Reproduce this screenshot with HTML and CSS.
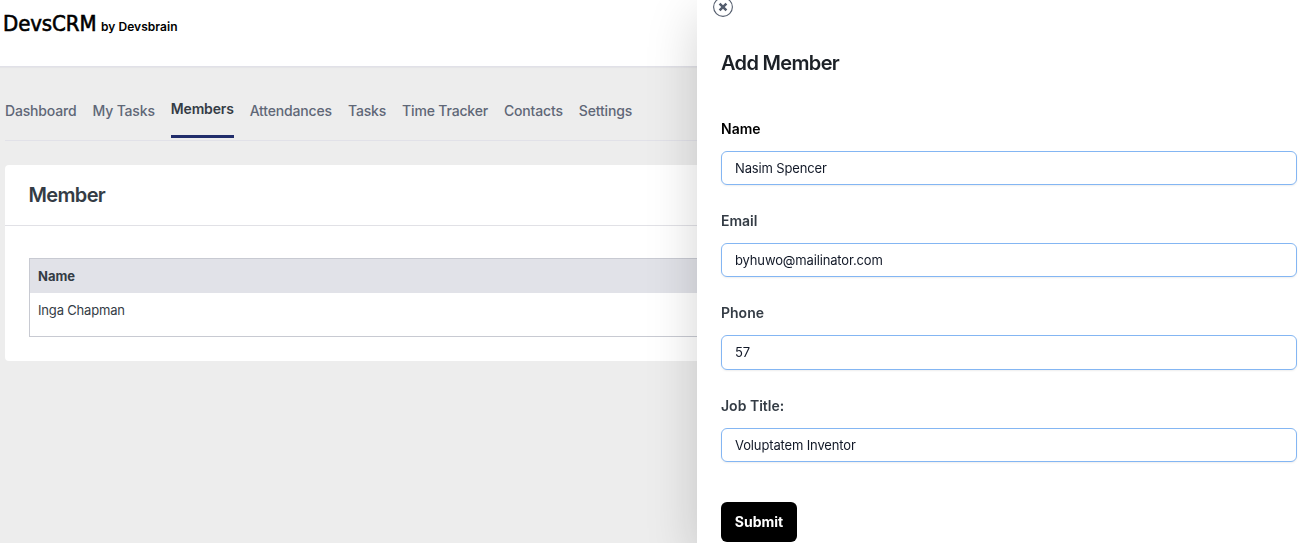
FILE: index.html
```html
<!DOCTYPE html>
<html lang="en">
<head>
    <meta charset="UTF-8">
    <meta name="viewport" content="width=device-width, initial-scale=1.0">
    <title>DevsCRM - Members</title>
    <link rel="stylesheet" href="styles.css">
</head>
<body>
    <header class="topbar">
        <span class="logo">DevsCRM</span>
        <span class="byline">by Devsbrain</span>
    </header>

    <main class="content">
        <nav class="tabs">
            <a class="tab">Dashboard</a>
            <a class="tab">My Tasks</a>
            <a class="tab active">Members</a>
            <a class="tab">Attendances</a>
            <a class="tab">Tasks</a>
            <a class="tab">Time Tracker</a>
            <a class="tab">Contacts</a>
            <a class="tab">Settings</a>
        </nav>

        <section class="card">
            <h2 class="card-title">Member</h2>
            <div class="card-body">
                <table class="members">
                    <thead>
                        <tr><th>Name</th></tr>
                    </thead>
                    <tbody>
                        <tr><td>Inga Chapman</td></tr>
                    </tbody>
                </table>
            </div>
        </section>
    </main>

    <aside class="drawer">
        <button class="close" type="button" aria-label="Close">
            <svg width="22" height="22" viewBox="0 0 22 22" fill="none">
                <circle cx="11" cy="11" r="9.4" stroke="#545d6d" stroke-width="1.1"/>
                <path d="M7.6 7.6l6.8 6.8M14.4 7.6l-6.8 6.8" stroke="#545d6d" stroke-width="2.5"/>
            </svg>
        </button>
        <h2 class="drawer-title">Add Member</h2>
        <form class="member-form">
            <div class="field">
                <label class="dark" for="name">Name</label>
                <input type="text" id="name" value="Nasim Spencer">
            </div>
            <div class="field">
                <label for="email">Email</label>
                <input type="text" id="email" value="byhuwo@mailinator.com">
            </div>
            <div class="field">
                <label for="phone">Phone</label>
                <input type="text" id="phone" value="57">
            </div>
            <div class="field">
                <label for="job">Job Title:</label>
                <input type="text" id="job" value="Voluptatem Inventor">
            </div>
            <button class="submit" type="submit">Submit</button>
        </form>
    </aside>
</body>
</html>
```

FILE: styles.css
```css
* {
    box-sizing: border-box;
}

body {
    margin: 0;
    height: 543px;
    overflow: hidden;
    font-family: Inter, "Liberation Sans", sans-serif;
    background-color: #ededed;
    color: #343c45;
}

.topbar {
    display: flex;
    align-items: baseline;
    height: 67px;
    padding: 10px 3px 0;
    background-color: #ffffff;
    border-bottom: 1px solid #e1e1e8;
    box-shadow: 0 1px 1px rgba(60, 60, 90, 0.04);
    color: #000000;
}

.logo {
    width: 98px;
    font-family: "DejaVu Sans Condensed", "DejaVu Sans", sans-serif;
    font-stretch: condensed;
    font-size: 22px;
    line-height: 27px;
    letter-spacing: -0.1px;
    -webkit-text-stroke: 0.6px #000000;
}

.byline {
    font-size: 12px;
    font-weight: 600;
    letter-spacing: 0.04px;
}

.content {
    padding: 24px 5px 0;
}

.tabs {
    display: flex;
    gap: 16px;
    height: 50px;
    border-bottom: 1px solid #e1e1e8;
}

.tab {
    height: 47px;
    padding-top: 10px;
    font-size: 14px;
    font-weight: 500;
    line-height: 20px;
    letter-spacing: -0.17px;
    color: #5f6777;
    white-space: nowrap;
}

.tab.active {
    padding-top: 8px;
    border-bottom: 3px solid #212d6b;
    font-weight: 600;
    color: #343c45;
}

.card {
    margin-top: 24px;
    height: 196px;
    background-color: #ffffff;
    border-radius: 4px;
}

.card-title {
    margin: 0;
    height: 61px;
    padding-left: 23.5px;
    border-bottom: 1px solid #e1e1e6;
    font-size: 20px;
    font-weight: 600;
    line-height: 60px;
    letter-spacing: -0.65px;
}

.card-body {
    padding: 32px 24px 24px;
}

.members {
    width: 100%;
    height: 79px;
    border: 1px solid #c8cad2;
    border-spacing: 0;
    font-size: 13px;
    text-align: left;
}

.members th {
    height: 34px;
    padding: 0 8px;
    background-color: #e1e2e8;
    font-weight: 700;
}

.members td {
    height: 43px;
    padding: 8px 8px 0;
    line-height: 18px;
    letter-spacing: -0.17px;
    vertical-align: top;
}

.drawer {
    position: fixed;
    top: 0;
    right: 0;
    width: 603px;
    height: 543px;
    padding: 0 3px 0 24px;
    background-color: #ffffff;
    box-shadow: 0 16px 48px rgba(0, 0, 0, 0.176);
}

.close {
    position: absolute;
    top: -4px;
    left: 15px;
    width: 22px;
    height: 22px;
    padding: 0;
    border: 0;
    background: none;
}

.close svg {
    display: block;
}

.drawer-title {
    margin: 0;
    padding-top: 48px;
    font-size: 20px;
    font-weight: 600;
    line-height: 30px;
    letter-spacing: -0.67px;
    color: #1c2127;
}

.member-form {
    padding-top: 41px;
}

.field {
    height: 92.22px;
}

.field label {
    display: block;
    margin-bottom: 12px;
    font-size: 14px;
    font-weight: 600;
    line-height: 20px;
}

.field label.dark {
    color: #000000;
}

.field input {
    display: block;
    width: 100%;
    height: 34.1px;
    padding: 0 13px;
    border: 1px solid #84b6f3;
    border-radius: 6px;
    box-shadow: 0 1px 2px rgba(0, 0, 0, 0.07);
    font-family: inherit;
    font-size: 13px;
    letter-spacing: -0.14px;
    color: #111827;
    outline: none;
}

.submit {
    display: block;
    margin-top: 14px;
    width: 76px;
    height: 40px;
    padding: 0 0 1px;
    border: 0;
    border-radius: 6px;
    background-color: #000000;
    color: #ffffff;
    font-family: inherit;
    font-size: 14px;
    font-weight: 700;
}
```
